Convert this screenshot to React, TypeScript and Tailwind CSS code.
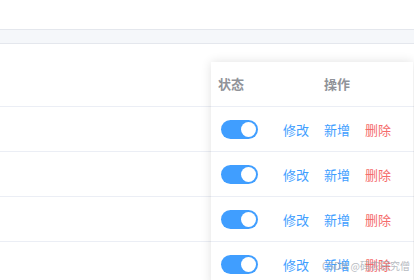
const rows = [0, 1, 2, 3];

function Toggle() {
  return (
    <span className="flex h-[19px] w-[37px] items-center justify-end rounded-full bg-[#409eff] pr-[2px]">
      <span className="h-[15px] w-[15px] rounded-full bg-white" />
    </span>
  );
}

export default function App() {
  return (
    <div className="relative h-[280px] w-[414px] overflow-hidden bg-white font-['Noto_Sans_CJK_SC','Noto_Sans',sans-serif] text-[13px]">
      <div className="h-[29px]" />
      <div className="h-[15px] border-y border-[#e4e7ed] bg-[#f5f7fa]" />

      {/* main table body */}
      <div className="h-[63px] border-b border-[#ebeef5]" />
      {rows.map((r) => (
        <div key={r} className="h-[45px] border-b border-[#ebeef5]" />
      ))}

      {/* fixed right column */}
      <div className="absolute left-[211px] top-[62px] w-[202px] bg-white shadow-[0_0_10px_rgba(0,0,0,0.12)]">
        <div className="flex h-[45px] items-center border-b border-[#ebeef5] font-bold text-[#909399]">
          <span className="w-[62px] pl-[7px]">状态</span>
          <span className="pl-[51px]">操作</span>
        </div>
        {rows.map((r) => (
          <div key={r} className="flex h-[45px] items-center border-b border-[#ebeef5]">
            <div className="w-[62px] pl-[10px]">
              <Toggle />
            </div>
            <div className="flex gap-[15px] pl-[10px] leading-none">
              <span className="text-[#409eff]">修改</span>
              <span className="text-[#409eff]">新增</span>
              <span className="text-[#f56c6c]">删除</span>
            </div>
          </div>
        ))}
      </div>

      <span className="absolute left-[322px] top-[259px] whitespace-nowrap text-[10px] leading-[13px] text-[#9aa0a8] opacity-70">
        CSDN @码农研究僧
      </span>
    </div>
  );
}
